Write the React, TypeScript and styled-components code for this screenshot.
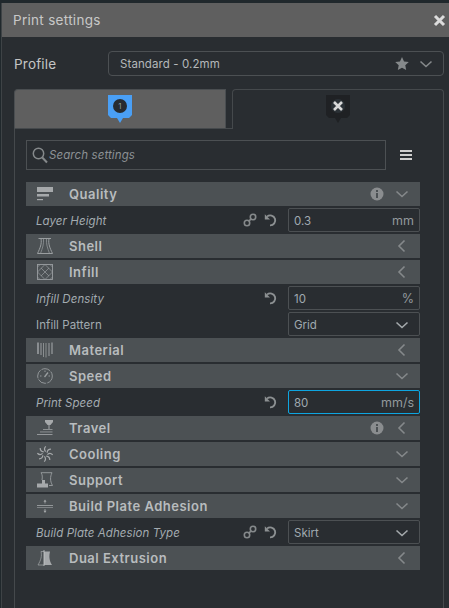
import React, { FC, ReactNode } from "react";
import styled, { createGlobalStyle } from "styled-components";

const GlobalStyle = createGlobalStyle`
  html, body {
    margin: 0;
    padding: 0;
    height: 100%;
    background: #20282c;
    overflow: hidden;
  }
  #root {
    height: 100%;
  }
  * {
    box-sizing: border-box;
  }
`;

const Page = styled.div`
  height: 608px;
  padding: 3px 0 0 1px;
  font-family: Inter, "Liberation Sans", sans-serif;
`;

const Win = styled.div`
  height: 605px;
  background: #292d31;
  border-left: 1px solid #3e4346;
  display: flex;
  flex-direction: column;
`;

const TitleBar = styled.div`
  height: 34px;
  flex: none;
  background: #5f5f5f;
  display: flex;
  align-items: center;
  justify-content: space-between;
  padding: 0 3px 0 11px;
  color: #c8c8c8;
  font-size: 13.5px;
  letter-spacing: 0.3px;
`;

const CloseBtn = styled.svg`
  width: 13px;
  height: 13px;
  display: block;
`;

const ProfileRow = styled.div`
  display: flex;
  align-items: center;
  height: 25px;
  margin: 14px 5px 0 12px;
`;

const ProfileLabel = styled.div`
  width: 94px;
  color: #c4c4c4;
  font-size: 13.5px;
  letter-spacing: 0.2px;
`;

const ProfileCombo = styled.div`
  flex: 1;
  height: 25px;
  border: 1px solid #4c5053;
  border-radius: 4px;
  display: flex;
  align-items: center;
  padding: 0 10px 0 11px;
  color: #b4b8ba;
  font-size: 11.5px;
  letter-spacing: 0.1px;
`;

const ProfileName = styled.span`
  flex: 1;
`;

const ComboIcons = styled.div`
  display: flex;
  align-items: center;
  gap: 10px;
`;

const Extruders = styled.div`
  margin: 13px 5px 0 12px;
  flex: 1;
  display: flex;
  flex-direction: column;
  min-height: 0;
`;

const TabRow = styled.div`
  display: flex;
  height: 40px;
  flex: none;
`;

const ActiveTab = styled.div`
  width: 212px;
  background: #5f5f5f;
  border: 1px solid #4a4e51;
  border-bottom: 1px solid #45494c;
  border-radius: 4px 0 0 0;
  display: flex;
  justify-content: center;
  padding-top: 5px;
`;

const TabGap = styled.div`
  width: 6px;
  border-bottom: 1px solid #45494c;
`;

const OtherTab = styled.div`
  flex: 1;
  border: 1px solid #45494c;
  border-bottom: none;
  border-radius: 4px 4px 0 0;
  display: flex;
  justify-content: center;
  padding-top: 5px;
`;

const Shield = styled.svg`
  width: 24px;
  height: 28px;
  display: block;
`;

const Panel = styled.div`
  flex: 1;
  border-left: 1px solid #45494c;
  border-right: 1px solid #45494c;
  padding: 11px 23px 0 11px;
`;

const SearchRow = styled.div`
  display: flex;
  align-items: center;
  height: 30px;
  margin-right: -23px;
  margin-bottom: 12px;
`;

const SearchBox = styled.div`
  width: 360px;
  height: 30px;
  border: 1px solid #4c5053;
  display: flex;
  align-items: center;
  padding-left: 5px;
  gap: 1px;
  color: #8c9194;
  font-size: 11.5px;
  font-style: italic;
  letter-spacing: 0.1px;
`;

const MenuBtn = styled.div`
  margin-left: 14px;
  width: 12px;
  display: flex;
  flex-direction: column;
  gap: 2px;
`;

const MenuLine = styled.div`
  height: 2px;
  background: #cfcfcf;
`;

const List = styled.div`
  width: 394px;
  display: flex;
  flex-direction: column;
  gap: 2px;
`;

const Category = styled.div`
  height: 24px;
  background: #4c5154;
  display: flex;
  align-items: center;
  padding-left: 11px;
`;

const CategoryIcon = styled.svg`
  width: 16px;
  height: 16px;
  flex: none;
  display: block;
`;

const CategoryTitle = styled.div`
  margin-left: 16px;
  flex: 1;
  color: #b8bcbe;
  font-size: 13px;
  font-weight: 600;
  letter-spacing: 0.5px;
`;

const InfoSlot = styled.div`
  width: 14px;
  height: 14px;
  margin-right: 11px;
  display: flex;
`;

const ChevronSlot = styled.div`
  width: 14px;
  margin-right: 11px;
  display: flex;
  justify-content: center;
`;

const SettingRow = styled.div`
  height: 24px;
  display: flex;
  align-items: center;
  padding-left: 10px;
`;

const SettingLabel = styled.div<{ $italic?: boolean }>`
  flex: 1;
  padding-top: 2px;
  color: #a3abb0;
  font-size: 11.5px;
  letter-spacing: 0.08px;
  font-style: ${(p) => (p.$italic ? "italic" : "normal")};
`;

const ActionIcons = styled.div`
  display: flex;
  align-items: center;
  gap: 7px;
  margin-right: 10px;
`;

const Control = styled.div<{ $focused?: boolean }>`
  width: 132px;
  height: 24px;
  border: 1px solid ${(p) => (p.$focused ? "#0ea5e0" : "#4c5053")};
  border-radius: 2px;
  display: flex;
  align-items: center;
  justify-content: space-between;
  padding: 1px 5px 0;
  color: #a0aab0;
  font-size: 11.5px;
`;

const Unit = styled.span`
  color: #93999d;
  font-size: 12.5px;
`;

const SelectChevron = styled.span`
  display: flex;
  margin-right: 5px;
`;

const Chevron: FC<{ dir?: "down" | "left"; color?: string }> = ({
  dir = "down",
  color = "#85898b",
}) => (
  <svg width="14" height="14" viewBox="0 0 14 14" fill="none" stroke={color} strokeWidth="1.6">
    {dir === "down" ? <polyline points="1.5,4.5 7,9.5 12.5,4.5" /> : <polyline points="9.5,1.5 4,7 9.5,12.5" />}
  </svg>
);

const InfoIcon = () => (
  <svg width="14" height="14" viewBox="0 0 14 14">
    <circle cx="7" cy="7" r="6.5" fill="#8a8d8f" />
    <rect x="6" y="6" width="2" height="5" fill="#4c5154" />
    <rect x="6" y="3" width="2" height="2" fill="#4c5154" />
  </svg>
);

const LinkIcon = () => (
  <svg width="14" height="14" viewBox="0 0 14 14" fill="none" stroke="#85898b" strokeWidth="1.6">
    <circle cx="4" cy="10" r="2.7" />
    <circle cx="10" cy="4" r="2.7" />
    <line x1="5.6" y1="8.4" x2="8.4" y2="5.6" />
  </svg>
);

const ResetIcon = () => (
  <svg width="14" height="14" viewBox="0 0 14 14" fill="none">
    <path d="M3 3.6 A5 5 0 1 1 6 12.4" stroke="#8c9092" strokeWidth="1.9" />
    <path d="M0.8 1.2 L0.8 6.4 L6 6.4 Z" fill="#8c9092" />
  </svg>
);

const qualityIcon = (
  <>
    <rect x="0" y="1" width="16" height="5" fill="#a6a9ab" />
    <rect x="0" y="8" width="12" height="2.5" fill="#a6a9ab" />
    <rect x="0" y="13" width="6" height="1.2" fill="#a6a9ab" />
  </>
);

const shellIcon = (
  <g fill="none" stroke="#9a9ea0" strokeWidth="1">
    <path d="M1.5 .5 H14 M4 .5 C5 6 3 10 .5 15.5 H15.5 C13 10 11 6 12 .5" />
    <path d="M6.5 .5 C7 6 5.5 10 3.5 15.5 M9.5 .5 C9 6 10.5 10 12.5 15.5" strokeWidth=".7" />
  </g>
);

const infillIcon = (
  <g fill="none" stroke="#9a9ea0" strokeWidth="0.9">
    <rect x=".5" y=".5" width="15" height="15" />
    <path d="M.5 8 L8 .5 L15.5 8 L8 15.5 Z M.5 3 L3 .5 M13 .5 L15.5 3 M.5 13 L3 15.5 M15.5 13 L13 15.5 M4 4 L12 12 M12 4 L4 12" strokeWidth=".7" />
  </g>
);

const materialIcon = (
  <g stroke="#9a9ea0" fill="none">
    <path d="M1 .5 V12" strokeWidth="1.6" />
    <path d="M4 1 V13" strokeWidth="1" />
    <path d="M6.5 1 V15" strokeWidth=".8" />
    <path d="M9 1 V15.5" strokeWidth=".8" />
    <path d="M12 1 V14" strokeWidth="1" />
    <path d="M15 .5 V12" strokeWidth="1.2" />
  </g>
);

const speedIcon = (
  <g fill="none" stroke="#9a9ea0" strokeWidth="0.9">
    <circle cx="8" cy="8" r="7.3" strokeDasharray="9 1.2" />
    <path d="M7.5 9 L11 4.5" strokeWidth="1.3" />
    <path d="M3 8 H4.5 M11.5 8 H13 M8 2.5 V4" />
  </g>
);

const travelIcon = (
  <g fill="#a6a9ab">
    <path d="M8 0 H16 V2 L13.5 5 H10.5 L8 2 Z" />
    <rect x="11.5" y="5" width="1" height="4" />
    <rect x="6" y="9" width="9.5" height=".9" opacity=".8" />
    <rect x="3" y="11.5" width="12.5" height=".9" opacity=".8" />
    <rect x="0" y="14" width="15.5" height="1" opacity=".8" />
  </g>
);

const coolingIcon = (
  <g fill="none" stroke="#a6a9ab" strokeWidth="1.2">
    {[0, 45, 90, 135, 180, 225, 270, 315].map((a) => (
      <path key={a} d="M8.6 5.6 C7.2 4 7.2 2 8.8 .4" transform={`rotate(${a} 8 8)`} />
    ))}
  </g>
);

const supportIcon = (
  <>
    <path d="M4 .7 H15 C13 5 13 9 15.5 13.5 H12" fill="none" stroke="#9a9ea0" strokeWidth=".9" />
    <path d="M4 .7 C5.5 3 5.5 5 5 8" fill="none" stroke="#9a9ea0" strokeWidth=".9" />
    <path d="M5 8 H8 V11.5 H11 V15.5 H0 V11.5 H5 Z" fill="#a6a9ab" />
  </>
);

const adhesionIcon = (
  <g fill="#a6a9ab">
    <rect x="0" y="7" width="16" height=".8" />
    <rect x="0" y="9" width="16" height=".8" opacity=".7" />
    <path d="M8 1.5 L9.5 3.8 H8.4 V5.5 H7.6 V3.8 H6.5 Z" />
    <path d="M8 15 L9.5 12.7 H8.4 V11 H7.6 V12.7 H6.5 Z" />
  </g>
);

const dualIcon = (
  <>
    <path d="M7 1.5 H13 C12 6 12 10 15 15 H7 Z" fill="#a6a9ab" />
    <path d="M7 1.5 H4 C5 6 4 10 1 15 H7" fill="none" stroke="#9a9ea0" strokeWidth=".8" />
    <path d="M7 0 V16" stroke="#c8cacb" strokeWidth=".8" />
  </>
);

type Row =
  | { kind: "cat"; title: string; icon: ReactNode; info?: boolean; open?: boolean }
  | {
      kind: "set";
      label: string;
      italic?: boolean;
      link?: boolean;
      reset?: boolean;
      value: string;
      unit?: string;
      select?: boolean;
      focused?: boolean;
    };

const rows: Row[] = [
  { kind: "cat", title: "Quality", icon: qualityIcon, info: true, open: true },
  { kind: "set", label: "Layer Height", italic: true, link: true, reset: true, value: "0.3", unit: "mm" },
  { kind: "cat", title: "Shell", icon: shellIcon },
  { kind: "cat", title: "Infill", icon: infillIcon },
  { kind: "set", label: "Infill Density", italic: true, reset: true, value: "10", unit: "%" },
  { kind: "set", label: "Infill Pattern", value: "Grid", select: true },
  { kind: "cat", title: "Material", icon: materialIcon },
  { kind: "cat", title: "Speed", icon: speedIcon, open: true },
  { kind: "set", label: "Print Speed", italic: true, reset: true, value: "80", unit: "mm/s", focused: true },
  { kind: "cat", title: "Travel", icon: travelIcon, info: true },
  { kind: "cat", title: "Cooling", icon: coolingIcon, open: true },
  { kind: "cat", title: "Support", icon: supportIcon, open: true },
  { kind: "cat", title: "Build Plate Adhesion", icon: adhesionIcon, open: true },
  { kind: "set", label: "Build Plate Adhesion Type", italic: true, link: true, reset: true, value: "Skirt", select: true },
  { kind: "cat", title: "Dual Extrusion", icon: dualIcon },
];

const App: FC = () => {
  return (
    <Page>
      <GlobalStyle />
      <Win>
        <TitleBar>
          <span>Print settings</span>
          <CloseBtn viewBox="0 0 13 13">
            <path d="M2 2 L11 11 M11 2 L2 11" stroke="#dcdcdc" strokeWidth="3" />
          </CloseBtn>
        </TitleBar>
        <ProfileRow>
          <ProfileLabel>Profile</ProfileLabel>
          <ProfileCombo>
            <ProfileName>Standard - 0.2mm</ProfileName>
            <ComboIcons>
              <svg width="14" height="13" viewBox="0 0 24 23">
                <path d="M12 0 L15.6 7.8 L24 8.8 L17.8 14.6 L19.4 23 L12 18.8 L4.6 23 L6.2 14.6 L0 8.8 L8.4 7.8 Z" fill="#85898b" />
              </svg>
              <Chevron />
            </ComboIcons>
          </ProfileCombo>
        </ProfileRow>
        <Extruders>
          <TabRow>
            <ActiveTab>
              <Shield viewBox="0 0 24 28">
                <path d="M0 0 H24 V20 L21 23 H15 L12 28 L9 23 H3 L0 20 Z" fill="#4a9ff5" />
                <circle cx="12" cy="11" r="7" fill="#272b30" />
                <text x="12" y="14" textAnchor="middle" fontSize="8" fill="#8c9a9c" fontFamily="Inter, sans-serif">1</text>
              </Shield>
            </ActiveTab>
            <TabGap />
            <OtherTab>
              <Shield viewBox="0 0 24 28">
                <path d="M0 0 H24 V20 L21 23 H15 L12 28 L9 23 H3 L0 20 Z" fill="#1f2124" />
                <circle cx="12" cy="11" r="7" fill="#2b3136" />
                <path d="M8 7 L16 15 M16 7 L8 15" stroke="#d8d8d8" strokeWidth="2.6" />
              </Shield>
            </OtherTab>
          </TabRow>
          <Panel>
            <SearchRow>
              <SearchBox>
                <svg width="16" height="17" viewBox="0 0 16 17" fill="none" stroke="#85898b" strokeWidth="1.5">
                  <circle cx="6.5" cy="6.5" r="5.2" />
                  <line x1="10.3" y1="10.5" x2="15" y2="15.5" strokeWidth="2" />
                </svg>
                Search settings
              </SearchBox>
              <MenuBtn>
                <MenuLine />
                <MenuLine />
                <MenuLine />
              </MenuBtn>
            </SearchRow>
            <List>
              {rows.map((r) =>
                r.kind === "cat" ? (
                  <Category key={r.title}>
                    <CategoryIcon viewBox="0 0 16 16">{r.icon}</CategoryIcon>
                    <CategoryTitle>{r.title}</CategoryTitle>
                    {r.info && (
                      <InfoSlot>
                        <InfoIcon />
                      </InfoSlot>
                    )}
                    <ChevronSlot>
                      <Chevron dir={r.open ? "down" : "left"} />
                    </ChevronSlot>
                  </Category>
                ) : (
                  <SettingRow key={r.label}>
                    <SettingLabel $italic={r.italic}>{r.label}</SettingLabel>
                    <ActionIcons>
                      {r.link && <LinkIcon />}
                      {r.reset && <ResetIcon />}
                    </ActionIcons>
                    <Control $focused={r.focused}>
                      <span>{r.value}</span>
                      {r.unit && <Unit>{r.unit}</Unit>}
                      {r.select && (
                        <SelectChevron>
                          <Chevron color="#a4a9ac" />
                        </SelectChevron>
                      )}
                    </Control>
                  </SettingRow>
                )
              )}
            </List>
          </Panel>
        </Extruders>
      </Win>
    </Page>
  );
};

export default App;
